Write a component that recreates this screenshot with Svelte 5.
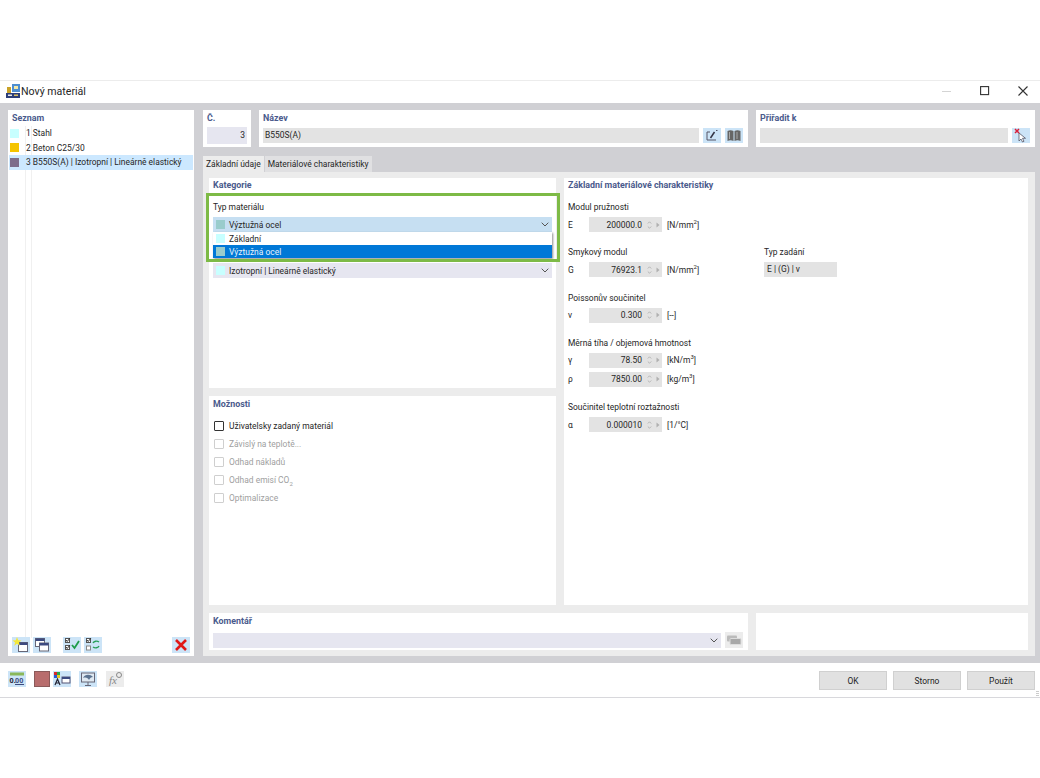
<script lang="ts">
	const materials = [
		{ no: 1, name: 'Stahl', color: '#c8ffff' },
		{ no: 2, name: 'Beton C25/30', color: '#f5c400' },
		{ no: 3, name: 'B550S(A) | Izotropní | Lineárně elastický', color: '#7d6d8c', selected: true }
	];
	const options = [
		{ label: 'Uživatelsky zadaný materiál', enabled: true },
		{ label: 'Závislý na teplotě...' },
		{ label: 'Odhad nákladů' },
		{ label: 'Odhad emisí CO', sub: '2' },
		{ label: 'Optimalizace' }
	];
	const groups = [
		{ title: 'Modul pružnosti', rows: [{ sym: 'E', val: '200000.0', unit: 'N/mm', sup: '2' }] },
		{ title: 'Smykový modul', rows: [{ sym: 'G', val: '76923.1', unit: 'N/mm', sup: '2' }], extra: true },
		{ title: 'Poissonův součinitel', rows: [{ sym: 'ν', val: '0.300', unit: '--' }] },
		{
			title: 'Měrná tíha / objemová hmotnost',
			rows: [
				{ sym: 'γ', val: '78.50', unit: 'kN/m', sup: '3' },
				{ sym: 'ρ', val: '7850.00', unit: 'kg/m', sup: '3' }
			]
		},
		{ title: 'Součinitel teplotní roztažnosti', rows: [{ sym: 'α', val: '0.000010', unit: '1/°C' }] }
	];
</script>

{#snippet chevron()}
	<svg class="chev" viewBox="0 0 8 5" width="8" height="5"><path d="M.7.7 4 4 7.3.7" fill="none" stroke="#555" /></svg>
{/snippet}

<div class="page">
	<div class="window">
		<header class="titlebar">
			<svg class="appicon" viewBox="0 0 14 14" width="14" height="14">
				<rect x="0" y="9" width="14" height="5" fill="#2c3e78" />
				<rect x="1" y="3" width="4" height="6" fill="#c9a227" />
				<rect x="6" y="0" width="8" height="8" fill="#4f8fd0" />
				<rect x="8" y="2" width="4" height="3" fill="#f4e9a8" />
				<rect x="2" y="10.500" width="4" height="1.500" fill="#e8e8e8" />
				<rect x="8" y="10.500" width="4" height="1.500" fill="#d9c060" />
			</svg>
			<span class="title">Nový materiál</span>
			<div class="winctl">
				<svg viewBox="0 0 10 10" width="10" height="10"><path d="M0 5.500h9" stroke="#d4d4d4" /></svg>
				<svg viewBox="0 0 10 10" width="10" height="10"><rect x=".6" y=".6" width="8" height="8" fill="none" stroke="#333" stroke-width="1.100" /></svg>
				<svg viewBox="0 0 10 10" width="10" height="10"><path d="M.5.5l9 9M9.500.5l-9 9" stroke="#333" stroke-width="1.100" /></svg>
			</div>
		</header>

		<div class="body">
			<aside class="list card">
				<h4>Seznam</h4>
				<ul>
					{#each materials as m}
						<li class:selected={m.selected}>
							<span class="swatch" style="background:{m.color}"></span>
							<span class="nowrap">{m.no} {m.name}</span>
						</li>
					{/each}
				</ul>
				<div class="list-tools">
					<button class="ico" aria-label="Nový">
						<svg viewBox="0 0 18 16"><rect x="6.500" y="5.500" width="9" height="9" fill="#fff" stroke="#667" /><rect x="6.500" y="5.500" width="9" height="2.500" fill="#3c4a80" /><path d="M5 0l1.200 3.200 3.300.2-2.600 2.100.9 3.200L5 6.800 2.200 8.700l.9-3.200L.5 3.400l3.300-.2z" fill="#f4e83a" /></svg>
					</button>
					<button class="ico" aria-label="Kopírovat">
						<svg viewBox="0 0 18 16"><rect x="2.500" y="1.500" width="9" height="8" fill="#fff" stroke="#667" /><rect x="2.500" y="1.500" width="9" height="2.500" fill="#3c4a80" /><rect x="6.500" y="6" width="9" height="8" fill="#fff" stroke="#667" /><rect x="6.500" y="6" width="9" height="2.500" fill="#3c4a80" /></svg>
					</button>
					<button class="ico gap" aria-label="Zkontrolovat">
						<svg viewBox="0 0 18 16"><rect x="2.500" y="1.500" width="4" height="4" fill="#fff" stroke="#555" /><rect x="2.500" y="8.500" width="4" height="4" fill="#fff" stroke="#555" /><path d="M3 3l1.200 1.500L7 1M3 10l1.200 1.500L7 8" fill="none" stroke="#333" /><path d="M9 8l2.500 3L16 4" fill="none" stroke="#1f9d4a" stroke-width="1.800" /></svg>
					</button>
					<button class="ico" aria-label="Přečíslovat">
						<svg viewBox="0 0 18 16"><rect x="2.500" y="1.500" width="4" height="4" fill="#fff" stroke="#555" /><rect x="2.500" y="9" width="4" height="4" fill="#fff" stroke="#888" /><path d="M3 3l1.200 1.500L7 1" fill="none" stroke="#333" /><path d="M9 6c1-2 4-2.500 6-1M15 9c-1 2-4 2.500-6 1" fill="none" stroke="#2aa05a" stroke-width="1.400" /></svg>
					</button>
					<button class="ico del" aria-label="Smazat">
						<svg viewBox="0 0 18 16"><path d="M4 3l10 10M14 3L4 13" stroke="#e01818" stroke-width="2.600" /></svg>
					</button>
				</div>
			</aside>

			<main class="main">
				<div class="top">
					<section class="card no">
						<h4>Č.</h4>
						<div class="field lav right">3</div>
					</section>
					<section class="card name">
						<h4>Název</h4>
						<div class="inline">
							<div class="field grey grow">B550S(A)</div>
							<button class="ico" aria-label="Upravit">
								<svg viewBox="0 0 18 15"><path d="M4 4v8h9M7 4H4" fill="none" stroke="#556" /><path d="M7.500 10l4-6" stroke="#334" stroke-width="1.500" /><path d="M13 2.500h1.500" stroke="#556" /></svg>
							</button>
							<button class="ico" aria-label="Knihovna">
								<svg viewBox="0 0 18 15"><path d="M2.500 3c2-1 4-1 6 0v10c-2-1-4-1-6 0zM9.500 3c2-1 4-1 6 0v10c-2-1-4-1-6 0z" fill="#666" /><path d="M4.500 4v7M12 4v7" stroke="#aaa" /></svg>
							</button>
						</div>
					</section>
					<section class="card assign">
						<h4>Přiřadit k</h4>
						<div class="inline">
							<div class="field grey grow"></div>
							<button class="ico" aria-label="Vybrat">
								<svg viewBox="0 0 18 15"><path d="M7 5l0 8 2-2 1.500 3 1.500-.7-1.500-3 3 0z" fill="#fff" stroke="#556" stroke-width=".8" /><path d="M3 1l4 4M7 1L3 5" stroke="#d8203a" stroke-width="1.500" /></svg>
							</button>
						</div>
					</section>
				</div>

				<nav class="tabs">
					<span class="tab active">Základní údaje</span>
					<span class="tab">Materiálové charakteristiky</span>
				</nav>

				<div class="tabpanel">
					<div class="content">
						<div class="col">
							<section class="card cat">
								<h4>Kategorie</h4>
								<div class="lbl">Typ materiálu</div>
								<div class="select blue">
									<span class="swatch" style="background:#99cccc"></span>
									<span class="grow">Výztužná ocel</span>
									{@render chevron()}
								</div>
								<div class="select lavsel second">
									<span class="swatch" style="background:#c8ffff"></span>
									<span class="grow">Izotropní | Lineárně elastický</span>
									{@render chevron()}
								</div>
								<div class="popup">
									<div class="opt">
										<span class="swatch" style="background:#c8ffff"></span>Základní
									</div>
									<div class="opt hot">
										<span class="swatch" style="background:#99cccc"></span>Výztužná ocel
									</div>
								</div>
								<div class="highlight"></div>
							</section>
							<section class="card opts">
								<h4>Možnosti</h4>
								<div class="checks">
									{#each options as o}
										<label class="check" class:off={!o.enabled}>
											<span class="box"></span>
											<span>{o.label}{#if o.sub}<sub>{o.sub}</sub>{/if}</span>
										</label>
									{/each}
								</div>
							</section>
						</div>
						<section class="card props">
							<h4>Základní materiálové charakteristiky</h4>
							<div class="groups">
								{#each groups as g}
									<div class="group">
										<div class="lbl">{g.title}</div>
										{#each g.rows as r}
											<div class="prop">
												<span class="sym">{r.sym}</span>
												<div class="num">
													<span class="val">{r.val}</span>
													<svg viewBox="0 0 5 10" width="5" height="10"><path d="M.8 3.500L2.500 1.800 4.200 3.500M.8 6.500L2.500 8.200 4.200 6.500" fill="none" stroke="#aaa" stroke-width=".8" /></svg>
													<svg viewBox="0 0 4 6" width="4" height="6"><path d="M.5.5l3 2.500-3 2.500z" fill="#b0b0b0" /></svg>
												</div>
												<span class="unit">[{r.unit}{#if r.sup}<sup>{r.sup}</sup>{/if}]</span>
											</div>
										{/each}
										{#if g.extra}
											<div class="inputtype">
												<div class="lbl">Typ zadání</div>
												<div class="field grey typefield">E | (G) | ν</div>
											</div>
										{/if}
									</div>
								{/each}
							</div>
						</section>
					</div>
					<div class="bottom">
						<section class="card comment">
							<h4>Komentář</h4>
							<div class="inline">
								<div class="select lavsel grow">
									<span class="grow"></span>
									{@render chevron()}
								</div>
								<button class="ico off" aria-label="Vložit">
									<svg viewBox="0 0 18 15"><rect x="2" y="3" width="10" height="6" rx="1" fill="#bbb" /><rect x="5" y="6" width="11" height="6" rx="1" fill="#a8a8a8" stroke="#ddd" /></svg>
								</button>
							</div>
						</section>
						<section class="card blank"></section>
					</div>
				</div>
			</main>
		</div>

		<footer class="footer">
			<button class="ico" aria-label="Číselný formát">
				<svg viewBox="0 0 18 16"><rect x="2" y="1.500" width="14" height="3" fill="#8ab85a" /><text x="1.500" y="12" class="zero">0.</text><text x="7" y="12" class="zero blue-zero">00</text><path d="M7 13.500h9" stroke="#3c4a80" /></svg>
			</button>
			<span class="redbox"></span>
			<button class="ico" aria-label="Barvy">
				<svg viewBox="0 0 18 16"><rect x="1" y="1" width="3" height="3" fill="#d8282a" /><rect x="4" y="1" width="3" height="3" fill="#2aa84a" /><rect x="1" y="4" width="3" height="3" fill="#2a5ad8" /><rect x="4" y="4" width="3" height="3" fill="#e8c828" /><path d="M2 14l2.500-6L7 14M3 12h3" fill="none" stroke="#223" stroke-width="1.200" /><rect x="9" y="6" width="8" height="6" fill="#fff" stroke="#557" /><rect x="9" y="6" width="8" height="2" fill="#3c4a80" /></svg>
			</button>
			<button class="ico view" aria-label="Zobrazení">
				<svg viewBox="0 0 18 16"><rect x="2.500" y="2" width="13" height="9" fill="#dfe9f2" stroke="#667" /><path d="M4 7c2-4 7-4 10-1-2 0-3 1-4 3-1-2-3-3-6-2z" fill="#5b7390" /><path d="M9 11v3M6 14.500h6" stroke="#667" /></svg>
			</button>
			<button class="ico off fx" aria-label="Vzorec">
				<svg viewBox="0 0 18 16"><text x="3" y="13" class="fx-text">fx</text><circle cx="13" cy="4" r="2.500" fill="none" stroke="#888" /></svg>
			</button>
			<div class="actions">
				<button class="btn">OK</button>
				<button class="btn">Storno</button>
				<button class="btn">Použít</button>
			</div>
			<span class="grip"></span>
		</footer>
	</div>
</div>

<style>
	:global(body) {
		margin: 0;
		background: #fff;
	}
	.page {
		width: 1040px;
		height: 778px;
		padding-top: 80px;
		box-sizing: border-box;
		font-family: Roboto, 'Noto Sans', sans-serif;
		font-size: 8.45px;
		color: #262626;
	}
	.window {
		height: 618px;
		display: flex;
		flex-direction: column;
		border-top: 1px solid #ececec;
		border-bottom: 1px solid #d8d8dc;
		box-sizing: border-box;
		background: #fff;
	}
	.titlebar {
		height: 22px;
		flex: none;
		display: flex;
		align-items: center;
		padding-left: 6px;
		padding-bottom: 2px;
		box-sizing: border-box;
		gap: 1px;
	}
	.title {
		font-size: 10.6px;
	}
	.winctl {
		margin-left: auto;
		display: flex;
		gap: 28px;
		padding-right: 12px;
	}
	.body {
		height: 560px;
		flex: none;
		background: #d0d0d4;
		display: flex;
		gap: 9px;
		padding: 7px 5px 7px 8px;
		box-sizing: border-box;
	}
	.card {
		background: #fff;
		box-sizing: border-box;
		position: relative;
	}
	h4 {
		margin: 0;
		font-size: 8.9px;
		line-height: 14px;
		font-weight: 700;
		color: #4a5a8c;
	}
	.top h4,
	.list h4,
	.opts h4,
	.comment h4 {
		padding-top: 1px;
	}
	.nowrap {
		white-space: nowrap;
	}
	.list {
		width: 186px;
		padding: 0 1px;
		display: flex;
		flex-direction: column;
		background-image: linear-gradient(#f0f0f0, #f0f0f0), linear-gradient(#f0f0f0, #f0f0f0);
		background-size: 1px 512px;
		background-position: 17px 16px, 23px 16px;
		background-repeat: no-repeat;
	}
	.list h4 {
		padding-left: 3px;
		padding-right: 3px;
	}
	.list ul {
		list-style: none;
		margin: 1px 0 0;
		padding: 0;
		flex: 1;
	}
	.list li {
		height: 14.5px;
		display: flex;
		align-items: center;
		gap: 7px;
		padding-left: 1px;
	}
	.list li.selected {
		background: #cce8ff;
	}
	.swatch {
		width: 9px;
		height: 9px;
		flex: none;
	}
	.list-tools {
		display: flex;
		align-items: center;
		gap: 3px;
		padding: 0 3px 3px;
	}
	.ico {
		width: 18px;
		height: 16px;
		padding: 0;
		border: 0;
		background: #cce4f7;
		flex: none;
		display: block;
	}
	.ico svg {
		display: block;
		width: 100%;
		height: 100%;
	}
	.ico.gap {
		margin-left: 9px;
	}
	.ico.del {
		margin-left: auto;
	}
	.ico.off {
		background: #ececec;
	}
	.main {
		flex: 1;
		min-width: 0;
		display: flex;
		flex-direction: column;
	}
	.top {
		display: flex;
		gap: 8px;
		height: 37px;
	}
	.top .card {
		padding: 0 4px;
	}
	.no {
		width: 48px;
	}
	.name {
		width: 489px;
		padding-right: 5px !important;
	}
	.assign {
		flex: 1;
	}
	.assign.card {
		padding-right: 5px;
	}
	.field {
		height: 15px;
		line-height: 15px;
		box-sizing: border-box;
		padding: 0 2px;
	}
	.lav {
		background: #e6e6f0;
		height: 17px;
		line-height: 17px;
	}
	.right {
		text-align: right;
		padding-right: 2px;
	}
	.grey {
		background: #e3e3e3;
	}
	.grow {
		flex: 1;
		min-width: 0;
	}
	.inline {
		display: flex;
		gap: 4px;
		align-items: center;
		margin-top: 3px;
	}
	.top .no .field {
		margin-top: 2px;
	}
	.top .ico {
		height: 15px;
	}
	.tabs {
		display: flex;
		gap: 1px;
		height: 16px;
		margin-top: 9px;
	}
	.tab {
		line-height: 16px;
		padding: 0 3px;
		background: #e0e0e2;
	}
	.tab.active {
		background: #ececec;
	}
	.tabpanel {
		flex: 1;
		background: #ececec;
		padding: 6px 7px 6px 6px;
		display: flex;
		flex-direction: column;
		gap: 8px;
		min-height: 0;
	}
	.content {
		height: 427px;
		display: flex;
		gap: 8px;
		flex: none;
	}
	.col {
		width: 347px;
		display: flex;
		flex-direction: column;
		gap: 8px;
	}
	.cat {
		height: 210px;
		padding: 0 4px;
	}
	.opts {
		flex: 1;
		padding: 0 4px;
	}
	.props {
		flex: 1;
		padding: 0 4px;
	}
	.cat h4,
	.opts h4,
	.props h4 {
		margin-bottom: 8px;
	}
	.lbl {
		line-height: 14px;
	}
	.select {
		height: 15px;
		display: flex;
		align-items: center;
		gap: 4px;
		padding: 0 2px 0 3px;
		box-sizing: border-box;
	}
	.cat .select {
		margin-top: 3px;
	}
	.blue {
		background: #c6dff2;
	}
	.lavsel {
		background: #e6e6f0;
	}
	.cat .second {
		margin-top: 31px;
	}
	.chev {
		margin-right: 1px;
	}
	.popup {
		position: absolute;
		left: 4px;
		right: 4px;
		top: 54px;
		background: #fff;
		box-shadow: 1px 1px 2px rgba(0, 0, 0, 0.45);
	}
	.opt {
		height: 13px;
		display: flex;
		align-items: center;
		gap: 4px;
		padding-left: 3px;
	}
	.opt.hot {
		background: #0078d7;
		color: #e8f2fb;
	}
	.highlight {
		position: absolute;
		left: -3px;
		right: -4px;
		top: 15px;
		height: 69px;
		border: 3px solid #7dba46;
		box-sizing: border-box;
		pointer-events: none;
	}
	.checks {
		display: flex;
		flex-direction: column;
		gap: 8px;
		margin-top: 10px;
		padding-left: 1px;
	}
	.check {
		height: 10px;
		display: flex;
		align-items: center;
		gap: 5px;
	}
	.box {
		width: 10px;
		height: 10px;
		box-sizing: border-box;
		border: 1px solid #333;
		border-radius: 1px;
	}
	.check.off {
		color: #a0a0a0;
	}
	.check.off .box {
		border-color: #cfcfcf;
	}
	sub,
	sup {
		font-size: 6px;
		line-height: 0;
	}
	.groups {
		display: flex;
		flex-direction: column;
		gap: 13.3px;
	}
	.group {
		position: relative;
	}
	.prop {
		height: 15px;
		margin-top: 3px;
		display: flex;
		align-items: center;
	}
	.group .prop + .prop {
		margin-top: 4px;
	}
	.sym {
		width: 21px;
		flex: none;
	}
	.num {
		width: 73px;
		height: 15px;
		background: #e3e3e3;
		display: flex;
		align-items: center;
		justify-content: flex-end;
		gap: 4px;
		padding-right: 2px;
		box-sizing: border-box;
	}
	.val {
		margin-right: 1px;
	}
	.unit {
		margin-left: 5px;
	}
	.inputtype {
		position: absolute;
		left: 196px;
		top: 0;
	}
	.typefield {
		width: 73px;
		margin-top: 3px;
		padding: 0 3px;
	}
	.bottom {
		display: flex;
		gap: 8px;
		height: 37px;
	}
	.comment {
		width: 539px;
		padding: 0 5px 0 4px;
	}
	.comment .inline {
		margin-top: 4px;
	}
	.comment .select {
		justify-content: flex-end;
	}
	.blank {
		flex: 1;
	}
	.footer {
		flex: 1;
		display: flex;
		align-items: flex-start;
		padding: 8px 5px 0 8px;
		position: relative;
	}
	.redbox {
		width: 16px;
		height: 16px;
		background: #b86d6d;
		border: 1px solid #8a5a5a;
		box-sizing: border-box;
		margin-left: 8px;
		margin-right: 3px;
	}
	.ico.view {
		margin-left: 8px;
	}
	.ico.fx {
		margin-left: 9px;
	}
	.zero {
		font-size: 7.5px;
		font-weight: 700;
		fill: #223;
	}
	.blue-zero {
		fill: #3c4a80;
	}
	.fx-text {
		font-family: 'Liberation Serif', serif;
		font-style: italic;
		font-size: 11px;
		fill: #888;
	}
	.actions {
		margin-left: auto;
		display: flex;
		gap: 6px;
	}
	.btn {
		width: 68px;
		height: 19px;
		padding: 0;
		border: 1px solid #d0d0d0;
		background: #e1e1e1;
		font: inherit;
		color: #222;
	}
	.grip {
		position: absolute;
		right: 1px;
		bottom: 1px;
		width: 3px;
		height: 5px;
		background: repeating-linear-gradient(#ccc 0 1px, transparent 1px 2px);
	}
</style>
